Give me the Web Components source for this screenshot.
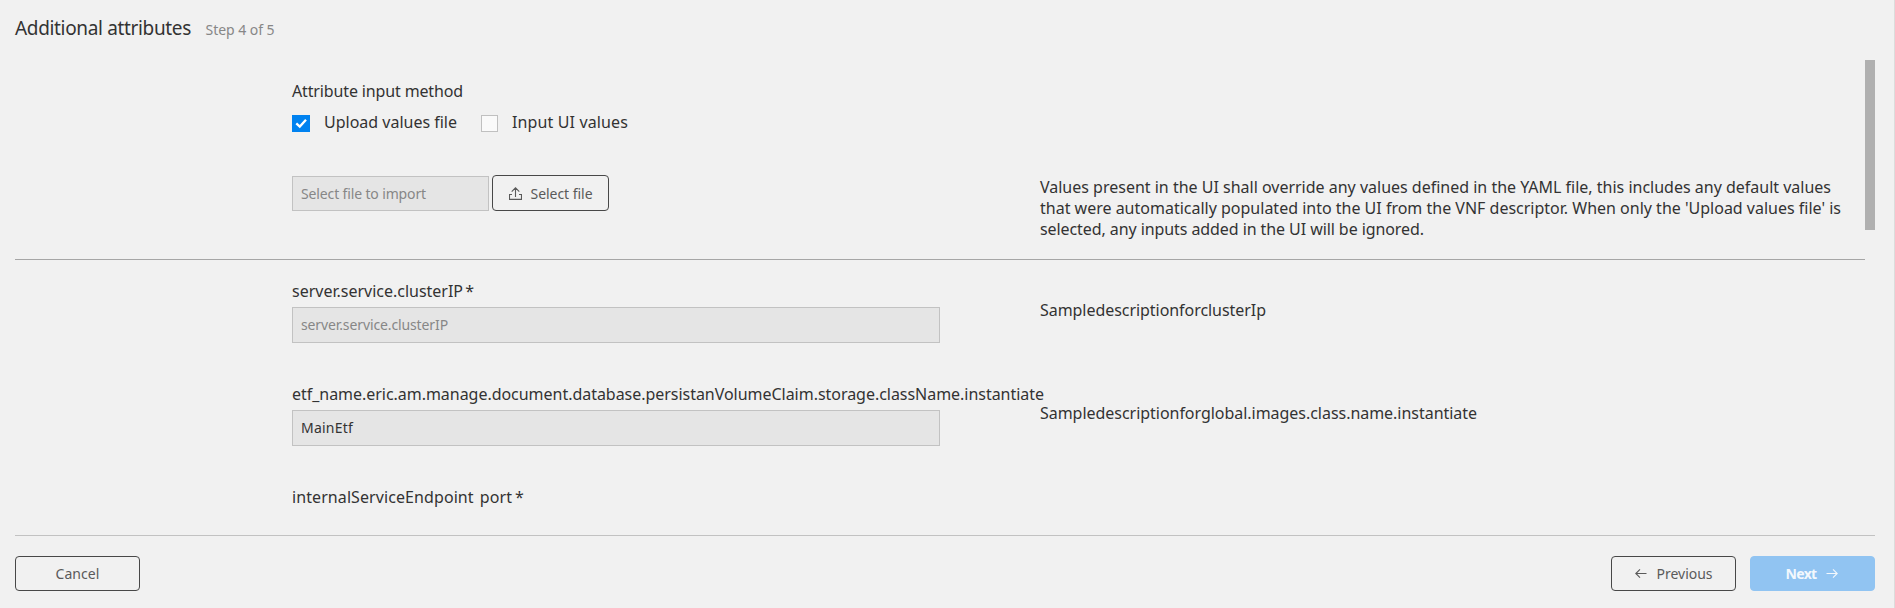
<!DOCTYPE html>
<html lang="en">
<head>
<meta charset="utf-8">
<title>Additional attributes</title>
<style>
html,body{margin:0;height:100%;background:#f1f1f1}
body{font-family:"Noto Sans","Open Sans",sans-serif;font-size:16px;color:#333;overflow:hidden}
</style>
</head>
<body>
<wizard-page></wizard-page>
<script>
const define = (name, html, init) => {
  const t = document.createElement('template');
  t.innerHTML = html;
  customElements.define(name, class extends HTMLElement {
    connectedCallback() {
      if (this.shadowRoot) return;
      this.attachShadow({mode: 'open'}).append(t.content.cloneNode(true));
      if (init) init.call(this, this.shadowRoot);
    }
  });
};

// One line of text whose tracking is adjusted to fill the given width.
define('tracked-text', `<style>
:host{display:block;white-space:pre;line-height:21px;flex:none}
span{display:inline-block}
</style><span><slot></slot></span>`, function (root) {
  const w = +this.getAttribute('w');
  this.style.width = w + 'px';
  const span = root.querySelector('span');
  const n = this.textContent.length;
  span.style.letterSpacing = ((w - span.getBoundingClientRect().width) / n) + 'px';
});

define('ui-checkbox', `<style>
:host{display:flex;align-items:flex-start}
.box{box-sizing:border-box;width:17px;height:17px;border:1px solid #c0c0c0;background:#fafafa;margin-top:3px}
svg{display:none}
:host([checked]) .box{width:18px;border:0;background:#0082f0}
:host([checked]) svg{display:block}
slot{display:block;margin-left:14px}
</style><div class="box"><svg width="18" height="17" viewBox="0 0 18 17"><path d="M4.3 8.3 7.8 11.6 14 4.8" fill="none" stroke="#fff" stroke-width="2.3"/></svg></div><slot></slot>`);

define('ui-input', `<style>
:host{display:block;box-sizing:border-box;height:36px;border:1px solid #c2c2c2;background:#e5e5e5;padding:6px 8px 0;font-size:14px;color:#333}
:host([placeholder]){color:#878787}
:host([short]){width:197px;height:35px;padding-top:6px}
</style><slot></slot>`);

define('ui-button', `<style>
:host{display:flex;box-sizing:border-box;width:125px;height:35px;border:1px solid #484848;border-radius:4px;justify-content:center;align-items:center;font-size:14px;color:#5a5a5a}
:host([primary]){background:#91c4f2;border-color:#91c4f2;color:#f3f8fd;font-weight:700}
:host([file]){width:117px;height:36px}
</style><slot></slot>`);

define('ui-icon', `<style>:host{display:block;flex:none;line-height:0}svg{fill:none;stroke:currentColor;stroke-width:1.1}</style><svg></svg>`, function (root) {
  const paths = {
    upload: 'M6.5 10V.8M2.7 4.7 6.5.8 10.3 4.7M3 7.5H.5V12.4H12.5V7.5H10',
    left: 'M11.5 6.5H.8M5 2.3.8 6.5 5 10.7',
    right: 'M.5 6.5H11.2M7 2.3 11.2 6.5 7 10.7'
  };
  const s = root.querySelector('svg');
  s.setAttribute('width', 13); s.setAttribute('height', 13); s.setAttribute('viewBox', '0 0 13 13');
  s.innerHTML = '<path d="' + paths[this.getAttribute('name')] + '"/>';
});

define('form-row', `<style>
:host{display:grid;grid-template-columns:648px 1fr;column-gap:100px;height:103px;padding-left:277px}
.desc{padding-top:19px}
.field{display:flex;flex-direction:column;gap:5px}
</style><div class="field"><slot name="label"></slot><slot></slot></div><div class="desc"><slot name="desc"></slot></div>`);

define('wizard-header', `<style>
:host{display:flex;height:60px;box-sizing:border-box;padding:14px 0 0 15px;align-items:flex-start}
.t{font-size:19px;line-height:28px}.s{font-size:14px;line-height:31px;color:#878787;margin-left:14.5px}
</style><tracked-text class="t" w="176">Additional attributes</tracked-text><tracked-text class="s" w="69">Step 4 of 5</tracked-text>`);

define('attribute-form', `<style>
:host{display:flex;height:450px;margin-left:15px;margin-right:19px;overflow:hidden}
.content{width:1850px;flex:none}
.bar{width:10px;height:170px;background:#b0b0b0}
.method{padding:21px 0 0 277px}
.checks{display:flex;margin-top:10px;gap:24px}
.top{display:flex;padding-left:277px;margin-top:42px;height:84px}
.top ui-input{margin-top:1px}
.top ui-button{margin-left:3px}
.note{margin:2px 0 0 431px}
hr{border:0;height:1px;margin:0 0 21px;background:#a6a6a6}
.req{word-spacing:-2px}
.port{word-spacing:-1.2px}
</style>
<div class="content">
 <div class="method"><tracked-text w="171">Attribute input method</tracked-text>
  <div class="checks"><ui-checkbox checked><tracked-text w="133">Upload values file</tracked-text></ui-checkbox><ui-checkbox><tracked-text w="116">Input UI values</tracked-text></ui-checkbox></div>
 </div>
 <div class="top"><ui-input short placeholder><tracked-text w="125">Select file to import</tracked-text></ui-input>
  <ui-button file><ui-icon name="upload" style="margin-right:9px"></ui-icon><tracked-text w="62">Select file</tracked-text></ui-button>
  <div class="note"><tracked-text w="791">Values present in the UI shall override any values defined in the YAML file, this includes any default values</tracked-text><tracked-text w="801">that were automatically populated into the UI from the VNF descriptor. When only the 'Upload values file' is</tracked-text><tracked-text w="384">selected, any inputs added in the UI will be ignored.</tracked-text></div>
 </div>
 <hr>
 <form-row><tracked-text class="req" slot="label" w="182">server.service.clusterIP *</tracked-text><ui-input placeholder><tracked-text w="147">server.service.clusterIP</tracked-text></ui-input><tracked-text slot="desc" w="226">SampledescriptionforclusterIp</tracked-text></form-row>
 <form-row><tracked-text slot="label" w="752">etf_name.eric.am.manage.document.database.persistanVolumeClaim.storage.className.instantiate</tracked-text><ui-input><tracked-text w="52">MainEtf</tracked-text></ui-input><tracked-text slot="desc" w="437">Sampledescriptionforglobal.images.class.name.instantiate</tracked-text></form-row>
 <form-row><tracked-text class="port" slot="label" w="232">internalServiceEndpoint&nbsp;&nbsp;port *</tracked-text></form-row>
</div>
<div class="bar"></div>`);

define('wizard-footer', `<style>
:host{display:flex;margin:25px 19px 0 15px;border-top:1px solid #c2c2c2;padding-top:20px;gap:14px}
.sp{flex:1}
</style><ui-button><tracked-text w="44">Cancel</tracked-text></ui-button><div class="sp"></div>
<ui-button><ui-icon name="left" style="margin-right:9px"></ui-icon><tracked-text w="56">Previous</tracked-text></ui-button>
<ui-button primary><tracked-text w="31">Next</tracked-text><ui-icon name="right" style="margin:0 1px 0 9px"></ui-icon></ui-button>`);

define('wizard-page', `<style>
:host{display:block;box-sizing:border-box;width:1895px;height:608px;border-right:1px solid #dcdcdc;background:#f1f1f1}
</style><wizard-header></wizard-header><attribute-form></attribute-form><wizard-footer></wizard-footer>`);
</script>
</body>
</html>
